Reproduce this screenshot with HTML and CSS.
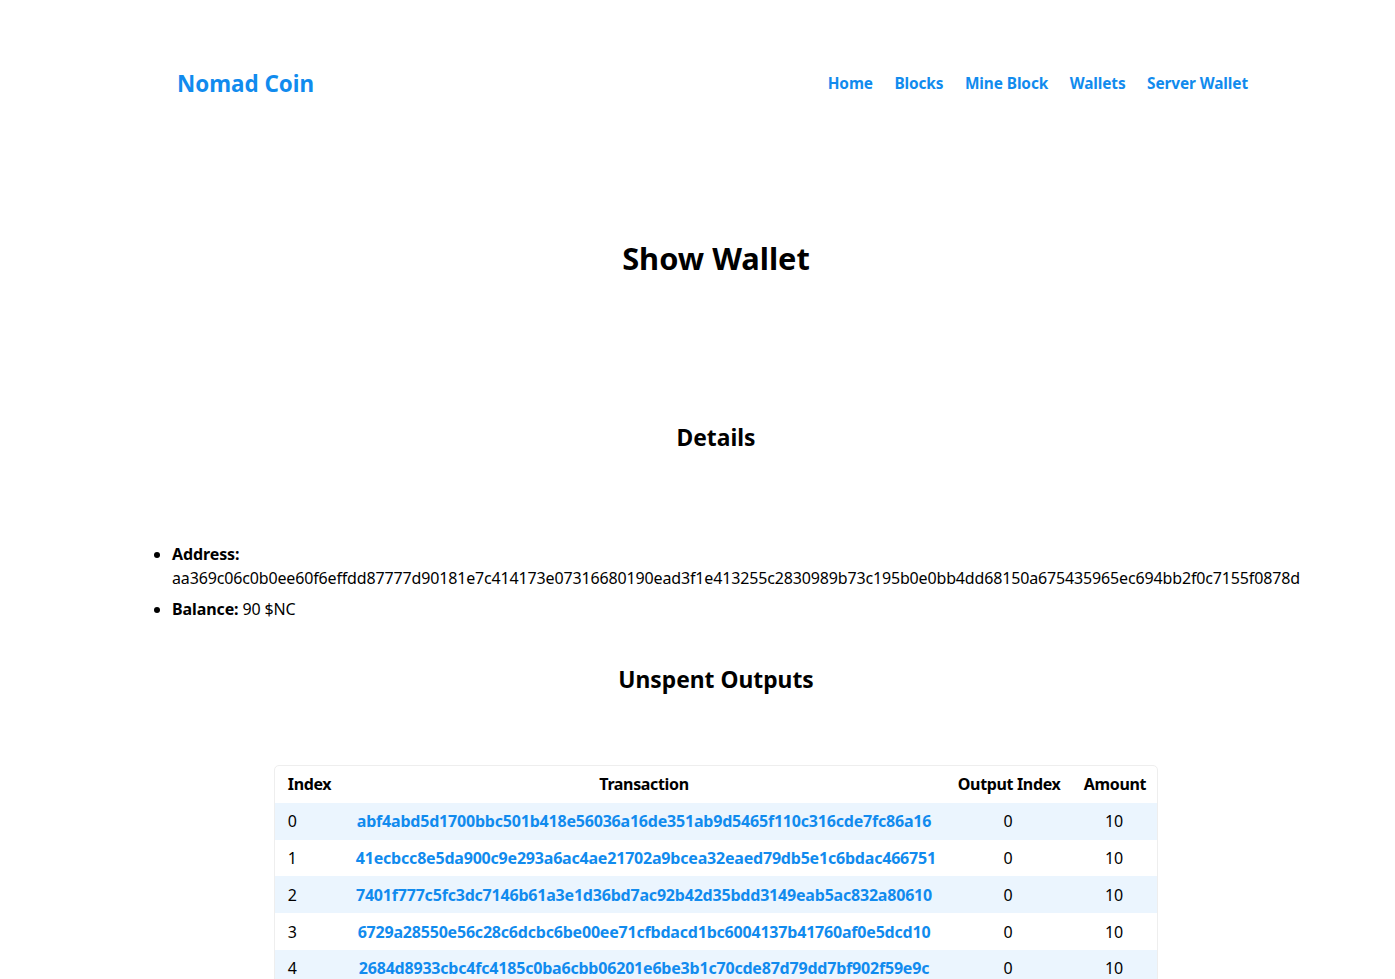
FILE: index.html
```html
<!DOCTYPE html>
<html lang="en">
<head>
<meta charset="utf-8">
<title>Show Wallet | Nomad Coin</title>
<link rel="stylesheet" href="styles.css">
</head>
<body>
<header class="site-header">
  <a class="logo" href="#">Nomad Coin</a>
  <nav class="nav">
    <a href="#">Home</a>
    <a href="#">Blocks</a>
    <a href="#">Mine Block</a>
    <a href="#">Wallets</a>
    <a href="#">Server Wallet</a>
  </nav>
</header>
<main class="main">
  <h1 class="title">Show Wallet</h1>
  <section class="details">
    <h2 class="section-title details-title">Details</h2>
    <ul class="info">
      <li><strong>Address:</strong><br>aa369c06c0b0ee60f6effdd87777d90181e7c414173e07316680190ead3f1e413255c2830989b73c195b0e0bb4dd68150a675435965ec694bb2f0c7155f0878d</li>
      <li><strong>Balance:</strong> 90 $NC</li>
    </ul>
  </section>
  <section class="outputs">
    <h2 class="section-title outputs-title">Unspent Outputs</h2>
    <table class="table">
      <colgroup>
        <col class="c-index"><col class="c-tx"><col class="c-out"><col class="c-amt">
      </colgroup>
      <thead>
        <tr><th class="left">Index</th><th>Transaction</th><th>Output Index</th><th>Amount</th></tr>
      </thead>
      <tbody>
        <tr><td class="left">0</td><td><a href="#">abf4abd5d1700bbc501b418e56036a16de351ab9d5465f110c316cde7fc86a16</a></td><td>0</td><td>10</td></tr>
        <tr><td class="left">1</td><td><a href="#">41ecbcc8e5da900c9e293a6ac4ae21702a9bcea32eaed79db5e1c6bdac466751</a></td><td>0</td><td>10</td></tr>
        <tr><td class="left">2</td><td><a href="#">7401f777c5fc3dc7146b61a3e1d36bd7ac92b42d35bdd3149eab5ac832a80610</a></td><td>0</td><td>10</td></tr>
        <tr><td class="left">3</td><td><a href="#">6729a28550e56c28c6dcbc6be00ee71cfbdacd1bc6004137b41760af0e5dcd10</a></td><td>0</td><td>10</td></tr>
        <tr><td class="left">4</td><td><a href="#">2684d8933cbc4fc4185c0ba6cbb06201e6be3b1c70cde87d79dd7bf902f59e9c</a></td><td>0</td><td>10</td></tr>
      </tbody>
    </table>
  </section>
</main>
</body>
</html>
```
FILE: styles.css
```css
* { box-sizing: border-box; }
html, body { margin: 0; padding: 0; background: #fff; }
body {
  font-family: "Noto Sans", "Open Sans", sans-serif;
  font-size: 16px;
  line-height: 24px;
  color: #000;
  letter-spacing: -0.15px;
}
a { color: #118bee; text-decoration: none; }

.site-header {
  display: flex;
  align-items: center;
  justify-content: space-between;
  width: 1071px;
  margin-left: 177px;
  padding-top: 69px;
}
.logo {
  font-weight: 700;
  font-size: 22.4px;
  line-height: 30px;
  letter-spacing: 0;
}
.nav {
  display: flex;
  gap: 21.5px;
  font-weight: 700;
  font-size: 15.4px;
  letter-spacing: -0.1px;
}

.main {
  width: 1168px;
  margin-left: 132px;
  padding-top: 139px;
  padding-bottom: 48px;
}
.title {
  margin: 0;
  text-align: center;
  font-size: 30.8px;
  line-height: 40px;
  font-weight: 700;
  letter-spacing: 0;
}
.section-title {
  margin: 0;
  text-align: center;
  font-size: 22.8px;
  line-height: 30px;
  font-weight: 700;
  letter-spacing: 0;
}
.details-title { margin-top: 145px; }
.info {
  margin: 89px 0 0;
  padding-left: 40px;
  list-style: disc;
}
.info li + li { margin-top: 7px; }
.info strong { font-weight: 700; letter-spacing: -0.1px; }
.outputs-title { margin-top: 44px; }

.table {
  margin: 70px auto 0;
  width: 884px;
  table-layout: fixed;
  border: 1px solid #eeeeee;
  border-radius: 5px;
  border-spacing: 0;
  white-space: nowrap;
}
.c-index { width: 68px; }
.c-tx { width: 602px; }
.c-out { width: 126px; }
.c-amt { width: 86px; }
.table th, .table td {
  padding: 6.4px 12.8px;
  line-height: 24px;
  text-align: center;
  overflow: hidden;
}
.table th { font-weight: 700; letter-spacing: -0.35px; }
.table .left { text-align: left; }
.table td a { font-weight: 700; letter-spacing: -0.2px; }
.table tbody tr:nth-child(odd) { background: #ebf5fe; }
```
